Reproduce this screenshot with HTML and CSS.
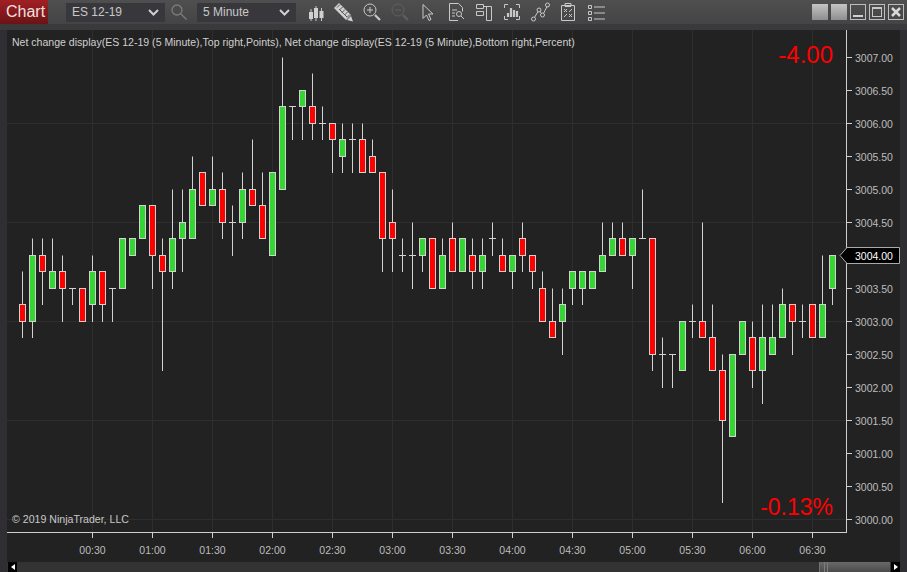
FILE: index.html
```html
<!DOCTYPE html>
<html lang="en">
<head>
  <meta charset="UTF-8" />
  <title>Chart - ES 12-19</title>
  <link rel="stylesheet" href="styles.css">
</head>
<body>

  <div class="toolbar">
    <div class="tab">Chart</div>

    <div class="select instrument">
      <span>ES 12-19</span>
      <svg class="chev" width="11" height="7" viewBox="0 0 11 7"><path d="M1 1l4.500 4.500L10 1" /></svg>
    </div>

    <div class="search">
      <svg width="18" height="18" viewBox="0 0 18 18"><circle cx="7" cy="7" r="5" /><path d="M11 11l5.500 5.500" /></svg>
    </div>

    <div class="select interval">
      <span>5 Minute</span>
      <svg class="chev" width="11" height="7" viewBox="0 0 11 7"><path d="M1 1l4.500 4.500L10 1" /></svg>
    </div>

    <div class="tools">
      <!-- bars -->
      <svg viewBox="0 0 20 20"><path class="thin" d="M5 7v12M10 4v15M15.500 6v13" /><path class="fill" d="M3 10h4v7H3zM8 6h4v10H8zM13.500 9h4v7h-4z" /></svg>
      <!-- drawing tools -->
      <svg viewBox="0 0 20 20"><path class="fill" d="M0 6l5-5 12 12-5 5z" /><path class="dark" d="M5 7l8 8M6 2.500L3 5.500M8.500 5l-3 3M11 7.500l-3 3M13.500 10l-3 3M16 12.500l-3 3" /><path class="fill" d="M13 18l4-4 2 5.500z" /></svg>
      <!-- zoom in -->
      <svg viewBox="0 0 20 20"><circle cx="8" cy="8" r="6" /><path class="thin" d="M5 8h6M8 5v6" /><path class="heavy" d="M13 13l5 5" /></svg>
      <!-- zoom out -->
      <svg class="off" viewBox="0 0 20 20"><circle cx="8" cy="8" r="6" /><path class="thin" d="M5 8h6" /><path class="heavy" d="M13 13l5 5" /></svg>
      <!-- pointer -->
      <svg viewBox="0 0 20 20"><path d="M5 2.500v14l3.500-3.500 2.500 5.500 2-1-2.500-5.500h4.500z" /></svg>
      <!-- data box -->
      <svg viewBox="0 0 20 20"><path d="M12 18.500H3.500v-17h9l4 4v4" /><path class="thin" d="M6 8h5M6 11h3M6 14h3" /><circle cx="13" cy="12" r="2.500" /><path d="M15 14l3 3" /></svg>
      <!-- indicators -->
      <svg viewBox="0 0 20 20"><path d="M2.500 2.500h7v4h-7zM2.500 9.500h7v4h-7zM9.500 4.500h8v14h-5v-14" /></svg>
      <!-- strategies -->
      <svg viewBox="0 0 20 20"><path d="M2.500 6V2.500H6M14 2.500h3.500V6M17.500 14v3.500H14M6 17.500H2.500V14" /><path class="heavy" d="M6 15v-4M9 15V6M12 15V8M15 15v-6" /></svg>
      <!-- drawing objects -->
      <svg viewBox="0 0 20 20"><circle cx="3.500" cy="17" r="2" /><circle cx="9" cy="8" r="2" /><circle cx="12.500" cy="13" r="2" /><circle cx="17.500" cy="3" r="2" /><path d="M4.500 15.500L8 9.500M10 9.500l1.500 2M13.500 11.500l3.500-7" /></svg>
      <!-- templates -->
      <svg viewBox="0 0 20 20"><path d="M3.500 3.500h13v15h-13zM7 1.500h6v3H7z" /><path class="thin" d="M6 7l3 3M9 7l-3 3M11 12l3 3M14 12l-3 3M6 15l3-3M11 10l3-3" /></svg>
      <!-- properties -->
      <svg viewBox="0 0 20 20"><path d="M2.500 3.500h3v3h-3zM2.500 9.500h3v3h-3zM2.500 15.500h3v3h-3zM8 5h11M8 11h11M8 17h11" /></svg>
    </div>

    <div class="win-btns">
      <div class="win-plain"></div>
      <div class="win-plain"></div>
      <div class="win-btn"><span class="min"></span></div>
      <div class="win-btn"><span class="max"></span></div>
      <div class="win-btn close">
        <svg width="12" height="12" viewBox="0 0 12 12"><path d="M2 2l8 8M10 2l-8 8" /></svg>
      </div>
    </div>
  </div>

  <div class="strip"></div>

  <div class="panel">
    <div class="chart">
      <svg id="plot" width="893" height="532" viewBox="7 30 893 532"></svg>
      <div class="label-top">Net change display(ES 12-19 (5 Minute),Top right,Points), Net change display(ES 12-19 (5 Minute),Bottom right,Percent)</div>
      <div class="net net-top">-4.00</div>
      <div class="net net-bottom">-0.13%</div>
      <div class="copyright">© 2019 NinjaTrader, LLC</div>
    </div>
    <div class="scrollbar">
      <div class="arrow left"></div>
      <div class="thumb"></div>
      <div class="arrow right"></div>
    </div>
  </div>

  <script src="chart.js"></script>
</body>
</html>
```

FILE: styles.css
```css
* {
  box-sizing: border-box;
}

body {
  margin: 0;
  width: 907px;
  height: 572px;
  overflow: hidden;
  background: #2f2f33;
  font-family: "Liberation Sans", Arial, sans-serif;
  display: flex;
  flex-direction: column;
}

.toolbar {
  height: 24px;
  display: flex;
  align-items: center;
  background: linear-gradient(to bottom, #4f4f4f, #444444);
  color: #c8c8c8;
}

.tab {
  width: 48px;
  height: 24px;
  margin-right: 18px;
  padding-left: 6px;
  font-size: 16px;
  line-height: 24px;
  color: #f0e0e0;
  background: linear-gradient(to bottom, #a02024, #6c1216);
}

.select {
  width: 99px;
  height: 19px;
  padding: 0 6px;
  display: flex;
  align-items: center;
  justify-content: space-between;
  font-size: 12px;
  background: #38383c;
}

.chev path {
  fill: none;
  stroke: #d0d0d0;
  stroke-width: 2;
}

.search {
  width: 32px;
  padding-left: 5px;
  display: flex;
}

.search svg {
  fill: none;
  stroke: #7c7c7c;
  stroke-width: 1.300;
}

.tools {
  margin-left: 10px;
  display: flex;
  gap: 8px;
}

.tools svg {
  width: 20px;
  height: 20px;
  fill: none;
  stroke: #c8c8c8;
  stroke-width: 1;
}

.tools .thin {
  stroke-width: 1;
}

.tools .heavy {
  stroke-width: 2.200;
}

.tools .fill {
  fill: #d0d0d0;
  stroke: none;
}

.tools .dark {
  stroke: #555555;
}

.tools .off {
  stroke: #6a6a6a;
  opacity: 0.7;
}

.win-btns {
  margin-left: auto;
  margin-right: 3px;
  display: flex;
  gap: 3px;
}

.win-plain {
  width: 16px;
  height: 16px;
  background: linear-gradient(to bottom, #c4c4c4, #8e8e8e);
}

.win-btn {
  width: 16px;
  height: 16px;
  border: 1px solid #bdbdbd;
  display: flex;
  align-items: center;
  justify-content: center;
}

.min {
  width: 10px;
  height: 2px;
  margin-top: 7px;
  background: #d0d0d0;
}

.max {
  width: 10px;
  height: 10px;
  border: 1px solid #c8c8c8;
  border-top-width: 2px;
}

.close path {
  fill: none;
  stroke: #d8d8d8;
  stroke-width: 2.500;
}

.strip {
  height: 6px;
  background: #3a3a3c;
}

.panel {
  flex: 1;
  margin: 0 7px;
  display: flex;
  flex-direction: column;
}

.chart {
  position: relative;
  height: 532px;
  background: #222222;
}

#plot {
  display: block;
}

#plot .grid {
  stroke: #2e2e2e;
  stroke-width: 1;
}

#plot .axis {
  stroke: #cfcfcf;
  stroke-width: 1;
}

#plot .wick {
  stroke: #d2d2d2;
  stroke-width: 1;
}

#plot .up {
  fill: #33d633;
  stroke: #d2d2d2;
}

#plot .down {
  fill: #ff0000;
  stroke: #d2d2d2;
}

#plot .tag {
  fill: #000000;
  stroke: #aaaaaa;
}

#plot text {
  font-family: "Liberation Sans", Arial, sans-serif;
  font-size: 10.500px;
  fill: #bdbdbd;
}

#plot .tag-text {
  fill: #ffffff;
}

.label-top {
  position: absolute;
  left: 5px;
  top: 6px;
  font-size: 10.560px;
  line-height: 13px;
  color: #d0d0d0;
  white-space: nowrap;
}

.copyright {
  position: absolute;
  left: 5px;
  top: 483px;
  font-size: 10.600px;
  line-height: 13px;
  color: #c8c8c8;
}

.net {
  position: absolute;
  right: 67px;
  line-height: 28px;
  color: #ff0000;
}

.net-top {
  top: 11px;
  font-size: 24px;
}

.net-bottom {
  top: 463px;
  font-size: 23px;
}

.scrollbar {
  height: 10px;
  display: flex;
  justify-content: flex-end;
  background: #333333;
  position: relative;
}

.arrow {
  width: 9px;
  height: 10px;
  background: #000000;
  display: flex;
  align-items: center;
  justify-content: center;
}

.arrow.left {
  position: absolute;
  left: 1px;
  top: 0;
}

.arrow::after {
  content: "";
  border-top: 3px solid transparent;
  border-bottom: 3px solid transparent;
}

.arrow.left::after {
  border-right: 4px solid #ffffff;
}

.arrow.right::after {
  border-left: 4px solid #ffffff;
}

.thumb {
  width: 71px;
  margin-right: 1px;
  border-left: 1px solid #707070;
  background:
    linear-gradient(to right, transparent 4px, #7c7c7c 4px, #7c7c7c 5px, transparent 5px, transparent 7px, #7c7c7c 7px, #7c7c7c 8px, transparent 8px),
    linear-gradient(to bottom, #6a6a6a, #4a4a4a);
}
```

FILE: chart.js
```js
const plot = document.getElementById('plot');

// open, high, low, close as points above 3000
const bars = [
  [3.25, 3.75, 2.75, 3], [3, 4.25, 2.75, 4], [4, 4.25, 3.25, 3.75], [3.5, 4.25, 3.5, 3.75],
  [3.75, 4, 3, 3.5], [3.5, 3.5, 3.25, 3.5], [3.5, 3.5, 3, 3], [3.25, 4, 3, 3.75],
  [3.75, 3.75, 3, 3.25], [3.5, 3.5, 3, 3.5], [3.5, 4.25, 3.5, 4.25], [4, 4.25, 4, 4.25],
  [4.25, 4.75, 4.25, 4.75], [4.75, 4.75, 3.5, 4], [4, 4.25, 2.25, 3.75], [3.75, 5, 3.5, 4.25],
  [4.25, 5, 3.75, 4.5], [4.25, 5.5, 4.25, 5], [5.25, 5.25, 4.75, 4.75], [4.75, 5.5, 4.75, 5],
  [5, 5.25, 4.25, 4.5], [4.5, 4.75, 4, 4.5], [4.5, 5.25, 4.25, 5], [5, 5.75, 4.75, 4.75],
  [4.75, 5.25, 4.25, 4.25], [4, 5.25, 4, 5.25], [5, 7, 5, 6.25], [6.25, 6.25, 5.75, 6.25],
  [6.25, 6.5, 5.75, 6.5], [6.25, 6.75, 5.75, 6], [6, 6.25, 5.75, 6], [6, 6, 5.25, 5.75],
  [5.5, 6, 5.25, 5.75], [5.75, 6, 5.25, 5.75], [5.75, 6, 5.25, 5.25], [5.5, 5.75, 5.25, 5.25],
  [5.25, 5.25, 3.75, 4.25], [4.5, 5, 3.75, 4.25], [4, 4.25, 3.75, 4], [4, 4.5, 3.5, 4],
  [4, 4.25, 3.75, 4.25], [4.25, 4.25, 3.5, 3.5], [3.5, 4.25, 3.5, 4], [4.25, 4.5, 3.75, 3.75],
  [3.75, 4.25, 3.75, 4.25], [4, 4.25, 3.5, 3.75], [3.75, 4.25, 3.5, 4], [4.25, 4.5, 4, 4.25],
  [4, 4.25, 3.75, 3.75], [3.75, 4, 3.5, 4], [4.25, 4.5, 3.75, 4], [4, 4, 3.5, 3.75],
  [3.5, 3.75, 3, 3], [3, 3.5, 2.75, 2.75], [3, 3.5, 2.5, 3.25], [3.5, 3.75, 3.25, 3.75],
  [3.5, 3.75, 3.25, 3.75], [3.5, 3.75, 3.5, 3.75], [3.75, 4.5, 3.75, 4], [4, 4.5, 4, 4.25],
  [4.25, 4.5, 4, 4], [4, 4.25, 3.5, 4.25], [4.25, 5, 4.25, 4.25], [4.25, 4.25, 2.25, 2.5],
  [2.5, 2.75, 2, 2.5], [2.5, 2.5, 2, 2.5], [2.25, 3, 2.25, 3], [3, 3.25, 2.75, 3],
  [3, 4.5, 2.75, 2.75], [2.75, 3.25, 2.25, 2.25], [2.25, 2.5, 0.25, 1.5], [1.25, 2.5, 1.25, 2.5],
  [2.5, 3, 2.5, 3], [2.75, 3, 2, 2.25], [2.25, 3.25, 1.75, 2.75], [2.5, 3.25, 2.5, 2.75],
  [2.75, 3.5, 2.75, 3.25], [3.25, 3.25, 2.5, 3], [3, 3.25, 2.75, 3], [3.25, 3.25, 2.75, 2.75],
  [2.75, 4, 2.75, 3.25], [3.5, 4, 3.25, 4]
];

function yOf(p) {
  return Math.ceil(519.5 - p * 66) - 0.5;
}

function line(x1, y1, x2, y2, cls) {
  return `<line x1="${x1}" y1="${y1}" x2="${x2}" y2="${y2}" class="${cls}" />`;
}

let out = '';

// grid
for (let k = 0; k < 13; k++) {
  const x = 92.5 + 60 * k;
  out += line(x, 30, x, 532, 'grid');
}
for (let k = 0; k < 5; k++) {
  const y = 123.5 + 99 * k;
  out += line(7, y, 846, y, 'grid');
}

// candles
bars.forEach((b, i) => {
  const x = 22.5 + 10 * i;
  const [o, h, l, c] = b;
  out += line(x, yOf(h), x, yOf(l) + 0.5, 'wick');
  if (o === c) {
    out += line(x - 3.5, yOf(o), x + 3.5, yOf(o), 'wick');
  } else {
    const top = yOf(Math.max(o, c));
    const bot = yOf(Math.min(o, c));
    out += `<rect x="${x - 3}" y="${top}" width="6" height="${bot - top}" class="${c > o ? 'up' : 'down'}" />`;
  }
});

// axes
out += line(846.5, 30, 846.5, 533, 'axis');
out += line(7, 532.5, 847, 532.5, 'axis');

for (let k = 0; k < 15; k++) {
  const y = 519.5 - 33 * k;
  out += line(847, y, 852, y, 'axis');
  if (k !== 8) {
    out += `<text x="855" y="${y + 4}">${(3000 + k / 2).toFixed(2)}</text>`;
  }
}

for (let k = 0; k < 13; k++) {
  const x = 92.5 + 60 * k;
  const mins = 30 + 30 * k;
  const label = `${String(Math.floor(mins / 60)).padStart(2, '0')}:${String(mins % 60).padStart(2, '0')}`;
  out += line(x, 533, x, 538, 'axis');
  out += `<text x="${x}" y="554" text-anchor="middle">${label}</text>`;
}

// last price tag
out += '<polygon class="tag" points="840,255.5 847,247.5 899.5,247.5 899.5,263.5 847,263.5" />';
out += '<text class="tag-text" x="855" y="259.500">3004.00</text>';

plot.innerHTML = out;
```
